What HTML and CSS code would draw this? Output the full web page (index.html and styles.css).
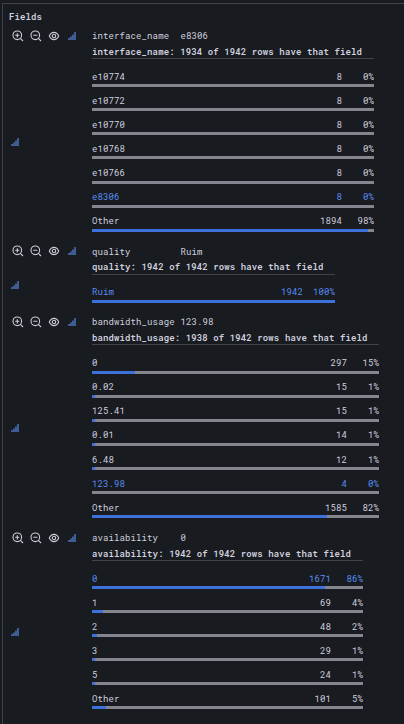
FILE: index.html
```html
<!DOCTYPE html>
<html lang="en">
<head>
<meta charset="utf-8">
<title>Fields</title>
<link rel="stylesheet" href="styles.css">
</head>
<body>
<svg class="defs" width="0" height="0">
  <symbol id="plus" viewBox="0 0 12 12"><circle cx="5.3" cy="5.3" r="4.3"/><path d="M8.4 8.4 11 11M3.2 5.3h4.2M5.3 3.2v4.2"/></symbol>
  <symbol id="minus" viewBox="0 0 12 12"><circle cx="5.3" cy="5.3" r="4.3"/><path d="M8.4 8.4 11 11M3.2 5.3h4.2"/></symbol>
  <symbol id="eye" viewBox="0 0 12 12"><path d="M1.3 6Q3 2.4 6 2.4T10.7 6Q9 9.6 6 9.6T1.3 6Z"/><circle cx="6" cy="6" r="1.7"/></symbol>
  <symbol id="signal" viewBox="0 0 8 8"><path d="M0 8V6H2V4.5H4V2.5H6V0H8V8Z"/></symbol>
</svg>
<main class="panel">
  <h1 class="title">Fields</h1>
  <div id="fields"></div>
</main>
<script src="fields.js"></script>
</body>
</html>
```
FILE: styles.css
```css
* { box-sizing: border-box; }
html { background: #181b1f; }
body {
  margin: 0;
  padding: 3px 0 0 2px;
  height: 724px;
  overflow: hidden;
  background: #181b1f;
  color: #d0d0df;
  font: 9px/12px "Roboto Mono", "DejaVu Sans Mono", monospace;
  letter-spacing: 0.11px;
}
.defs { position: absolute; }
.panel {
  height: 721px;
  border-top: 1px solid #404247;
  border-left: 1px solid #404247;
}
.title {
  margin: 0;
  padding: 7px 0 0 6px;
  height: 21.1px;
  font-size: 9px;
  line-height: 12px;
  font-weight: 600;
}
.head {
  display: grid;
  grid-template-columns: 80px 88.5px 1fr;
  height: 20px;
  margin-left: 9px;
  white-space: nowrap;
}
.icons { display: flex; gap: 6px; padding-top: 4.9px; }
.icons svg { width: 12px; height: 12px; fill: none; stroke: #ccccdc; stroke-width: 1.1; }
.icons .signal, .detail .signal { width: 8px; height: 8px; fill: #3f5c94; stroke: none; }
.icons .signal { margin: 2px 0 0 2px; }
.detail .signal { margin-bottom: 2px; }
.key, .value { padding-top: 5px; }
.detail { display: grid; grid-template-columns: 81px auto; justify-content: start; align-items: center; margin-left: 8px; }
.stats { padding-bottom: 8.77px; }
.summary { height: 14px; padding-top: 0.7px; border-bottom: 1px solid #404247; font-weight: 600; white-space: nowrap; }
.rows { padding-top: 4.05px; }
.row { height: 24.1px; padding-top: 7.7px; }
.labels { display: grid; grid-template-columns: 1fr auto 32px; height: 13.3px; text-align: right; }
.labels span:first-child { text-align: left; }
.active { color: #5b8df5; }
.bar { height: 3px; background: #858590; }
.fill { height: 3px; background: #3d71d9; }
```
FILE: fields.js
```js
const fields = [
  { key: 'interface_name', value: 'e8306', present: 1934, width: 282, rows: [
    ['e10774', 8, 0], ['e10772', 8, 0], ['e10770', 8, 0], ['e10768', 8, 0],
    ['e10766', 8, 0], ['e8306', 8, 0], ['Other', 1894, 98]] },
  { key: 'quality', value: 'Ruim', present: 1942, width: 243, rows: [['Ruim', 1942, 100]] },
  { key: 'bandwidth_usage', value: '123.98', present: 1938, width: 287, rows: [
    ['0', 297, 15], ['0.02', 15, 1], ['125.41', 15, 1], ['0.01', 14, 1],
    ['6.48', 12, 1], ['123.98', 4, 0], ['Other', 1585, 82]] },
  { key: 'availability', value: '0', present: 1942, width: 271, rows: [
    ['0', 1671, 86], ['1', 69, 4], ['2', 48, 2], ['3', 29, 1], ['5', 24, 1], ['Other', 101, 5]] }
];
const icon = name => `<svg class="${name}"><use href="#${name}"/></svg>`;
const row = (f, [label, count, pct]) => `
  <div class="row"><div class="labels${label === f.value ? ' active' : ''}"><span>${label}</span><span>${count}</span><span>${pct}%</span></div>
  <div class="bar"><div class="fill" style="width:${pct}%"></div></div></div>`;
document.getElementById('fields').innerHTML = fields.map(f => `
  <section>
    <div class="head"><div class="icons">${['plus', 'minus', 'eye', 'signal'].map(icon).join('')}</div>
      <span class="key">${f.key}</span><span class="value">${f.value}</span></div>
    <div class="detail">${icon('signal')}
      <div class="stats" style="width:${f.width}px">
        <div class="summary">${f.key}: ${f.present} of 1942 rows have that field</div>
        <div class="rows">${f.rows.map(r => row(f, r)).join('')}</div>
      </div></div>
  </section>`).join('');
```
